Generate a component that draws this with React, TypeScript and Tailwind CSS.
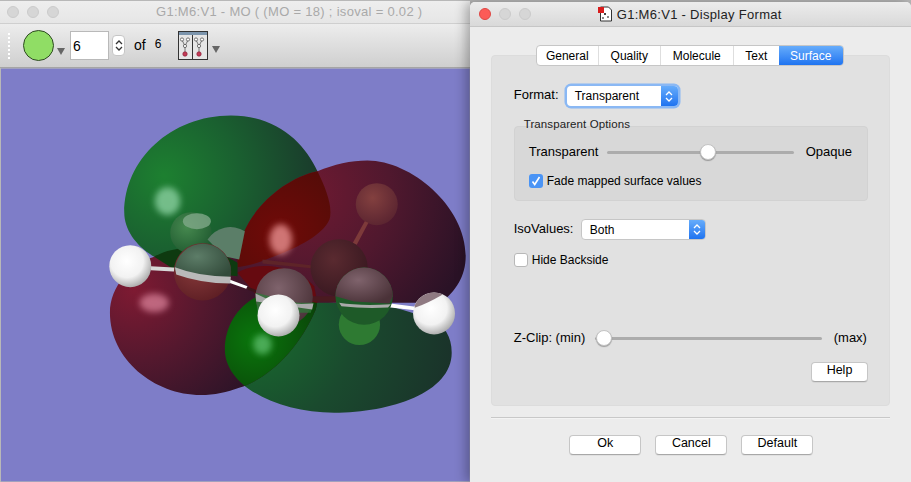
import React from "react";

const Lights = ({ active }: { active?: boolean }) => (
  <div className="flex items-center gap-2">
    <span className={active ? "w-3 h-3 rounded-full bg-[#fc5b57] border border-[#df4744]" : "w-3 h-3 rounded-full bg-[#d6d6d6] border border-[#cbcbcb]"} />
    <span className="w-3 h-3 rounded-full bg-[#d6d6d6] border border-[#cbcbcb]" />
    <span className="w-3 h-3 rounded-full bg-[#d6d6d6] border border-[#cbcbcb]" />
  </div>
);

const Tri = () => (
  <svg width="8" height="7" viewBox="0 0 8 7"><path d="M0 0h8L4 7z" fill="#666" /></svg>
);

const Chevrons = ({ color }: { color: string }) => (
  <svg width="8" height="13" viewBox="0 0 8 13" fill="none" stroke={color} strokeWidth="1.3">
    <path d="M1 5l3-3 3 3M1 8l3 3 3-3" />
  </svg>
);

const GaussIcon = () => (
  <svg width="30" height="29" viewBox="0 0 30 29">
    <rect x="0.5" y="0.5" width="29" height="28" fill="#e6e6e6" stroke="#333" />
    <rect x="1" y="1" width="28" height="3" fill="#7c95ad" />
    <path d="M14.5 4v25" stroke="#333" />
    {[0, 14].map((d) => (
      <g key={d} transform={`translate(${d} 0)`} fill="#fff" stroke="#444" strokeWidth="0.7">
        <path d="M4 9l3 6 3-6M7 15v9" fill="none" />
        <circle cx="4" cy="8.5" r="1.6" />
        <circle cx="10" cy="8.5" r="1.6" />
        <circle cx="7" cy="15" r="1.6" />
        <circle cx="7" cy="23" r="2.2" fill="#c43a55" stroke="#8a2038" />
      </g>
    ))}
  </svg>
);

const Slider = ({ width, at }: { width: string; at: string }) => (
  <div className={`${width} relative h-[3px] rounded-full bg-[#acacac]`}>
    <span className={`${at} absolute -top-[7px] w-4 h-4 rounded-full bg-white border border-[#c4c4c4] shadow-[0_1px_1px_rgba(0,0,0,0.3)]`} />
  </div>
);

const Btn = ({ label, className }: { label: string; className?: string }) => (
  <button className={`h-5 pb-[3px] rounded-[4px] bg-white border border-[#c6c6c6] border-b-[#a8a8a8] text-[12.5px] leading-[15px] text-black shadow-[0_1px_0_rgba(0,0,0,0.05)] ${className ?? ""}`}>
    {label}
  </button>
);

// lobes, written in the zoomed coordinates and scaled down by the group transform
const greenTop = "M190 472C135 440 100 390 100 340C100 180 240 48 420 48C560 48 640 130 680 215C705 265 728 325 716 360C690 420 580 460 500 490C400 520 250 520 190 472Z";
const redTop = "M440 500C430 370 560 240 680 215C730 195 780 183 830 183C960 183 1125 320 1125 470C1125 530 1095 575 1050 610L620 610L450 560C442 540 440 520 440 500Z";
const redLow = "M190 472C120 495 57 560 57 640C57 780 190 887 330 887C370 887 410 878 445 865C530 840 625 750 675 630C690 580 650 510 560 490C480 475 280 430 190 472Z";
const greenLow = "M500 590C440 620 402 680 402 750C402 860 560 940 730 940C900 940 1083 880 1083 760C1083 710 1060 680 1030 660L900 620L680 605C620 600 550 570 500 590Z";

const Molecule = () => (
  <svg className="w-full h-full block" viewBox="0 69 469 413">
    <defs>
      <radialGradient id="gt" gradientUnits="userSpaceOnUse" cx="220" cy="230" r="500">
        <stop offset="0" stopColor="#1d8030" />
        <stop offset="0.45" stopColor="#1a6030" />
        <stop offset="1" stopColor="#1a352b" />
      </radialGradient>
      <radialGradient id="rt" gradientUnits="userSpaceOnUse" cx="640" cy="280" r="520">
        <stop offset="0" stopColor="#701a32" />
        <stop offset="0.5" stopColor="#50182e" />
        <stop offset="1" stopColor="#2a1226" />
      </radialGradient>
      <radialGradient id="rl" gradientUnits="userSpaceOnUse" cx="130" cy="570" r="430">
        <stop offset="0" stopColor="#7e1a32" />
        <stop offset="0.5" stopColor="#54182e" />
        <stop offset="1" stopColor="#2e1428" />
      </radialGradient>
      <radialGradient id="gl" gradientUnits="userSpaceOnUse" cx="480" cy="680" r="620">
        <stop offset="0" stopColor="#186e2e" />
        <stop offset="0.5" stopColor="#1a4a2e" />
        <stop offset="1" stopColor="#1a322a" />
      </radialGradient>
      <radialGradient id="olapR" gradientUnits="userSpaceOnUse" cx="560" cy="400" r="240">
        <stop offset="0" stopColor="#700a08" />
        <stop offset="1" stopColor="#520c08" />
      </radialGradient>
      <radialGradient id="olapG" gradientUnits="userSpaceOnUse" cx="490" cy="720" r="240">
        <stop offset="0" stopColor="#0a760c" />
        <stop offset="1" stopColor="#0a3c08" />
      </radialGradient>
      <radialGradient id="white" cx="0.42" cy="0.38" r="0.65">
        <stop offset="0" stopColor="#ffffff" />
        <stop offset="0.6" stopColor="#f2f2f2" />
        <stop offset="1" stopColor="#a8a8a8" />
      </radialGradient>
      <radialGradient id="atomG" cx="0.4" cy="0.35" r="0.7">
        <stop offset="0" stopColor="#5d7d68" />
        <stop offset="1" stopColor="#324a3a" />
      </radialGradient>
      <radialGradient id="atomP" cx="0.4" cy="0.35" r="0.7">
        <stop offset="0" stopColor="#7f636c" />
        <stop offset="1" stopColor="#4a3238" />
      </radialGradient>
      <radialGradient id="atomD" cx="0.4" cy="0.35" r="0.7">
        <stop offset="0" stopColor="#5a2a30" />
        <stop offset="1" stopColor="#381820" />
      </radialGradient>
      <radialGradient id="atomM" cx="0.4" cy="0.35" r="0.7">
        <stop offset="0" stopColor="#83403f" />
        <stop offset="1" stopColor="#5a2430" />
      </radialGradient>
      <radialGradient id="atomLG" cx="0.4" cy="0.35" r="0.7">
        <stop offset="0" stopColor="#46894f" />
        <stop offset="1" stopColor="#205a30" />
      </radialGradient>
      <radialGradient id="atomR" cx="0.4" cy="0.4" r="0.7">
        <stop offset="0" stopColor="#8a3c3c" />
        <stop offset="1" stopColor="#5a1c22" />
      </radialGradient>
      <filter id="soft" x="-50%" y="-50%" width="200%" height="200%"><feGaussianBlur stdDeviation="10" /></filter>
      <clipPath id="cgt"><path d={greenTop} /></clipPath>
      <clipPath id="crl"><path d={redLow} /></clipPath>
    </defs>
    <rect x="0" y="69" width="469" height="413" fill="#7e7dc8" />
    <g transform="translate(90 100) scale(0.3333)">
      <path d={greenTop} fill="url(#gt)" />
      <path d={greenLow} fill="url(#gl)" />
      <path d={redLow} fill="url(#rl)" />
      <path d={redTop} fill="url(#rt)" />

      {/* overlaps */}
      <g clipPath="url(#cgt)"><path d={redTop} fill="url(#olapR)" /></g>
      <g clipPath="url(#crl)"><path d={greenLow} fill="url(#olapG)" /></g>
      <path d="M190 472C230 445 300 440 370 450L440 490L440 530L250 510Z" fill="#0e3a10" />
      <path d="M440 520C500 480 620 500 670 560L680 610L500 590Z" fill="#660a10" />

      {/* atoms seen through the lobes */}
      <circle cx="300" cy="400" r="62" fill="url(#atomLG)" />
      <ellipse cx="318" cy="365" rx="42" ry="24" fill="#7fa888" opacity="0.8" />
      <path d="M350 420A82 82 0 0 1 462 395L445 480L400 470Z" fill="#5b7e68" />
      <circle cx="806" cy="675" r="62" fill="#2e7a32" />
      <circle cx="858" cy="314" r="63" fill="url(#atomM)" />
      <path d="M785 432L822 365L833 370L798 436Z" fill="#7d3a3a" />
      <path d="M515 480L665 498L662 506L515 492Z" fill="#5e2428" />
      <circle cx="745" cy="505" r="86" fill="url(#atomD)" />

      {/* bonds */}
      <path d="M180 500L260 505L260 517L180 512Z" fill="#d8d8d8" />
      <path d="M400 534L470 560L466 568L398 544Z" fill="#ffffff" />
      <path d="M470 562L520 580L520 590L470 570Z" fill="#3c1418" />
      <path d="M640 590H790V606H640Z" fill="#4a1a20" />
      <path d="M880 610L975 622L972 632L880 622Z" fill="#ffffff" />

      {/* lower half of carbons */}
      <circle cx="335" cy="517" r="86" fill="url(#atomR)" />
      <path d="M252 505A85 85 0 0 1 420 505L420 530Q340 560 252 512Z" fill="url(#atomG)" />
      <path d="M252 503Q320 530 420 532L418 552Q330 552 256 525Z" fill="#b9b9b9" />
      <circle cx="580" cy="592" r="86" fill="url(#atomP)" />
      <path d="M494 580L500 640L660 640L668 610L620 610Z" fill="#2f7a3a" opacity="0.75" />
      <path d="M494 582Q560 620 668 612L664 630L496 606Z" fill="#aaa" />
      <circle cx="820" cy="590" r="86" fill="#1e5a28" />
      <path d="M734 590A86 86 0 0 1 906 590L896 612L790 606Z" fill="url(#atomP)" />
      <path d="M745 610Q810 620 900 614L892 624Q820 628 752 620Z" fill="#a9a9a9" />

      {/* bright spots */}
      <ellipse cx="230" cy="305" rx="38" ry="42" fill="#8ad0a0" opacity="0.8" filter="url(#soft)" />
      <ellipse cx="570" cy="420" rx="34" ry="46" fill="#e89090" opacity="0.8" filter="url(#soft)" />
      <ellipse cx="190" cy="610" rx="44" ry="28" fill="#e890a8" opacity="0.65" filter="url(#soft)" />
      <ellipse cx="515" cy="735" rx="28" ry="30" fill="#60c070" opacity="0.75" filter="url(#soft)" />

      {/* hydrogens */}
      <circle cx="118" cy="500" r="63" fill="url(#white)" />
      <circle cx="563" cy="648" r="63" fill="url(#white)" />
      <circle cx="1030" cy="642" r="63" fill="url(#white)" />
      <path d="M972 617A63 63 0 0 1 1056 585Q1010 612 972 625Z" fill="#8f7a82" />
    </g>
  </svg>
);

export default function App() {
  return (
    <div className="flex w-[911px] h-[482px] overflow-hidden bg-[#b8b8b8] font-['Liberation_Sans',sans-serif] text-black">
      {/* molecule window */}
      <div className="w-[470px] h-full pt-px flex flex-col">
        <div className="h-[22px] flex items-center pl-[7px] relative bg-gradient-to-b from-[#eeeeee] to-[#e6e6e6]">
          <Lights />
          <span className="ml-[97px] text-[13px] tracking-[0.3px] text-[#a9a9a9] whitespace-nowrap">
            G1:M6:V1 - MO ( (MO = 18) ; isoval = 0.02 )
          </span>
        </div>
        <div className="h-[45px] flex items-center pl-[7px] border-t border-[#cfcfcf] bg-gradient-to-b from-[#ededed] to-[#cfcfcf] border-b border-b-[#a5a5a5]">
          <div className="w-[4px] h-7 mr-[12px] bg-[radial-gradient(circle,#ffffff_1px,transparent_1px)] bg-[length:4px_4px]" />
          <span className="w-[31px] h-[31px] rounded-full bg-[#90dd65] border border-[#2e4a22]" />
          <span className="ml-[3px] mt-3 mr-[5px]"><Tri /></span>
          <input
            readOnly
            value="6"
            className="w-[39px] h-[29px] px-[2px] bg-white border border-[#b9b9b9] text-[14px] outline-none"
          />
          <span className="ml-[3px] w-[13px] h-[21px] flex items-center justify-center rounded-[4px] bg-white border border-[#c6c6c6]">
            <Chevrons color="#333" />
          </span>
          <span className="ml-[9px] text-[14px]">of</span>
          <span className="ml-[9px] text-[12px] -mt-1">6</span>
          <span className="ml-[17px]"><GaussIcon /></span>
          <span className="ml-[4px] mt-2"><Tri /></span>
        </div>
        <div className="flex-1 pl-px min-h-0"><Molecule /></div>
      </div>

      {/* display format dialog */}
      <div className="relative z-10 flex-1 mt-[2px] flex flex-col rounded-t-[5px] bg-[#ececec] shadow-[-4px_0_12px_rgba(0,0,0,0.3)]">
        <div className="h-[25px] flex items-center pl-[9px] rounded-t-[5px] bg-gradient-to-b from-[#ececec] to-[#d9d9d9] border-b border-[#c6c6c6]">
          <Lights active />
          <svg className="ml-[66px]" width="16" height="16" viewBox="0 0 16 16">
            <path d="M3.5 1h8l3 3v11h-11z" fill="#fff" stroke="#333" />
            <rect x="1" y="1" width="6" height="6" fill="#d81c1c" />
            <rect x="7" y="7" width="2" height="2" fill="#444" />
            <rect x="10" y="10" width="2" height="2" fill="#888" />
            <rect x="5" y="11" width="2" height="2" fill="#888" />
          </svg>
          <span className="ml-1 mt-px text-[13px] tracking-[0.3px] text-[#222] whitespace-nowrap">G1:M6:V1 - Display Format</span>
        </div>

        <div className="relative mx-[21px] mt-[28px] h-[351px] rounded-[4px] bg-[#e1e1e1] border border-[#dcdcdc]">
          {/* tabs sit over the panel's top edge */}
          <div className="absolute -top-[11px] left-[44px] flex h-[21px] rounded-[4px] bg-white border border-[#c6c6c6] text-[12px] overflow-hidden">
            <span className="w-[62px] flex items-center justify-center border-r border-[#dedede]">General</span>
            <span className="w-[62px] flex items-center justify-center border-r border-[#dedede]">Quality</span>
            <span className="w-[73px] flex items-center justify-center border-r border-[#dedede]">Molecule</span>
            <span className="w-[45px] flex items-center justify-center">Text</span>
            <span className="w-[64px] flex items-center justify-center text-white bg-gradient-to-b from-[#66acfb] to-[#1e73f0]">Surface</span>
          </div>

          <div className="flex flex-col pl-[22px] pr-[21px] pt-[30px]">
            <div className="flex items-center h-5 text-[13px]">
              <span className="w-[53px] -mt-[2px]">Format:</span>
              <div className="w-[111px] h-5 flex rounded-[4px] bg-white overflow-hidden text-[12px] shadow-[0_0_0_2.5px_#8ab8f4]">
                <span className="flex-1 pl-2 leading-[20px]">Transparent</span>
                <span className="w-[17px] flex items-center justify-center bg-gradient-to-b from-[#66acfb] to-[#1e73f0]"><Chevrons color="#fff" /></span>
              </div>
            </div>

            <div className="relative mt-5 h-[75px] rounded-[4px] bg-[#d8d8d8] border border-[#d2d2d2] pl-[14px] pr-[15px] pt-[15px]">
              <span className="absolute -top-[11px] left-[6px] px-[3px] text-[11.5px] tracking-[0.1px] text-[#222]">Transparent Options</span>
              <div className="flex items-center text-[13px] h-[20px]">
                <span className="w-[78px]">Transparent</span>
                <Slider width="w-[187px]" at="left-[93px]" />
                <span className="ml-3">Opaque</span>
              </div>
              <div className="flex items-center mt-[10px] text-[12px]">
                <span className="w-[14px] h-[14px] rounded-[3px] bg-[#4a94f5] flex items-center justify-center">
                  <svg width="10" height="10" viewBox="0 0 10 10" fill="none" stroke="#fff" strokeWidth="1.6"><path d="M1.5 5.5l2.2 3L8.5 1" /></svg>
                </span>
                <span className="ml-1">Fade mapped surface values</span>
              </div>
            </div>

            <div className="flex items-center h-[21px] mt-[18px] text-[13px]">
              <span className="w-[67px] -mt-[2px]">IsoValues:</span>
              <div className="w-[125px] h-[21px] flex rounded-[4px] bg-white border border-[#c6c6c6] overflow-hidden text-[12px]">
                <span className="flex-1 pl-2 leading-[20px]">Both</span>
                <span className="w-[16px] flex items-center justify-center bg-gradient-to-b from-[#66acfb] to-[#1e73f0]"><Chevrons color="#fff" /></span>
              </div>
            </div>

            <div className="flex items-center mt-[11px] text-[12px]">
              <span className="w-[14px] h-[14px] rounded-[3px] bg-white border border-[#b8b8b8]" />
              <span className="ml-1">Hide Backside</span>
            </div>

            <div className="flex items-center mt-[61px] h-4 text-[13px]">
              <span className="w-[81px]">Z-Clip: (min)</span>
              <Slider width="w-[227px]" at="left-[1px]" />
              <span className="ml-3">(max)</span>
            </div>

            <div className="flex justify-end mt-[16px]">
              <Btn label="Help" className="w-[57px]" />
            </div>
          </div>
        </div>

        <div className="mx-[21px] mt-[11px] h-[2px] border-t border-[#c8c8c8] bg-white/40" />

        <div className="flex justify-center gap-[14px] mt-[16px] pl-[2px]">
          <Btn label="Ok" className="w-[72px]" />
          <Btn label="Cancel" className="w-[72px]" />
          <Btn label="Default" className="w-[72px]" />
        </div>
      </div>
    </div>
  );
}
